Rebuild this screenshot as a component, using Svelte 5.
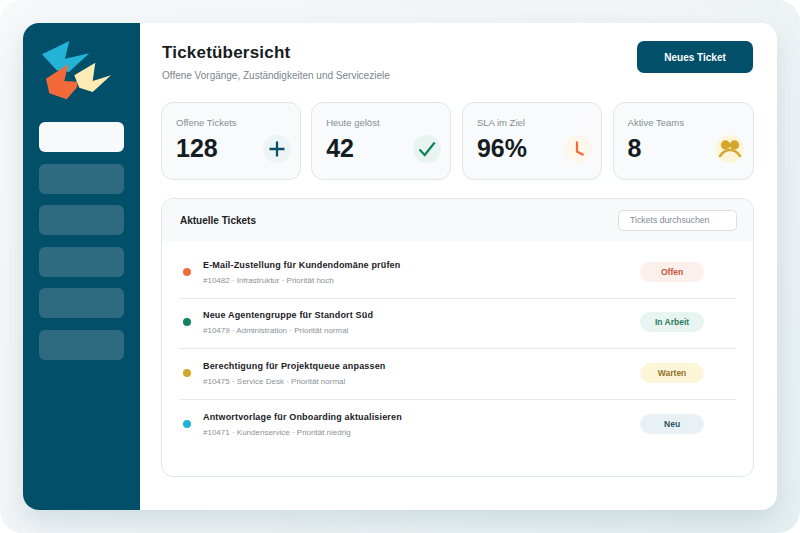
<script>
  const stats = [
    { label: 'Offene Tickets', value: '128', icon: 'plus' },
    { label: 'Heute gelöst', value: '42', icon: 'check' },
    { label: 'SLA im Ziel', value: '96%', icon: 'clock' },
    { label: 'Aktive Teams', value: '8', icon: 'team' }
  ];

  const tickets = [
    { title: 'E-Mail-Zustellung für Kundendomäne prüfen', meta: '#10482 · Infrastruktur · Priorität hoch', dot: 'orange', status: 'Offen', tone: 'open' },
    { title: 'Neue Agentengruppe für Standort Süd', meta: '#10479 · Administration · Priorität normal', dot: 'green', status: 'In Arbeit', tone: 'work' },
    { title: 'Berechtigung für Projektqueue anpassen', meta: '#10475 · Service Desk · Priorität normal', dot: 'yellow', status: 'Warten', tone: 'wait' },
    { title: 'Antwortvorlage für Onboarding aktualisieren', meta: '#10471 · Kundenservice · Priorität niedrig', dot: 'blue', status: 'Neu', tone: 'new' }
  ];

  const navItems = [0, 1, 2, 3, 4, 5];
</script>

<div class="backdrop">
  <div class="window">
    <aside class="sidebar">
      <svg class="logo" viewBox="0 0 72 62" width="72" height="62" aria-label="Logo">
        <polygon fill="#22b3d6" points="1,13.3 28.3,0 24,17.7 48.3,12.3 28,31 15.7,29.3" />
        <polygon fill="#f26a3a" points="5,37.7 27.3,23.3 23.3,40 36.7,40.7 35.7,46.7 25.7,58.3 8.3,52.3" />
        <polygon fill="#fdebb5" points="33.3,34.3 54.3,21.7 51.7,40 70,34.3 51.7,51 38.3,46.7" />
      </svg>
      <nav class="nav">
        {#each navItems as item}
          <div class="nav-item" class:active={item === 0}></div>
        {/each}
      </nav>
    </aside>

    <main class="main">
      <header class="top">
        <div>
          <h1>Ticketübersicht</h1>
          <p>Offene Vorgänge, Zuständigkeiten und Serviceziele</p>
        </div>
        <button class="primary">Neues Ticket</button>
      </header>

      <section class="stats">
        {#each stats as stat}
          <div class="stat">
            <div class="stat-label">{stat.label}</div>
            <div class="stat-value">{stat.value}</div>
            <div class="stat-icon {stat.icon}">
              <svg viewBox="0 0 28 28" width="28" height="28">
                {#if stat.icon === 'plus'}
                  <path d="M14 6.5v15M6.5 14h15" stroke="#0b4f68" stroke-width="2.3" fill="none" />
                {:else if stat.icon === 'check'}
                  <path d="M6.5 14.5l5.2 5.5 10-12.5" stroke="#128062" stroke-width="2.2" fill="none" />
                {:else if stat.icon === 'clock'}
                  <path d="M13 6.5v10l6.5 3.5" stroke="#f26a3a" stroke-width="2.2" fill="none" />
                {:else}
                  <circle cx="9.5" cy="10" r="4.7" fill="#d4a72c" />
                  <circle cx="18.5" cy="10" r="4.7" fill="#d4a72c" />
                  <path d="M4 21c3-4.500 6-6 10-6s7 1.500 10 6" stroke="#d4a72c" stroke-width="2.6" stroke-linecap="round" fill="none" />
                {/if}
              </svg>
            </div>
          </div>
        {/each}
      </section>

      <section class="panel">
        <div class="panel-head">
          <h2>Aktuelle Tickets</h2>
          <input class="search" placeholder="Tickets durchsuchen" />
        </div>
        <ul class="rows">
          {#each tickets as ticket}
            <li class="row">
              <span class="dot {ticket.dot}"></span>
              <div class="info">
                <div class="title">{ticket.title}</div>
                <div class="meta">{ticket.meta}</div>
              </div>
              <span class="pill {ticket.tone}">{ticket.status}</span>
            </li>
          {/each}
        </ul>
      </section>
    </main>
  </div>
</div>

<style>
  :global(body) {
    margin: 0;
    background: #fff;
    font-family: "Liberation Sans", Arial, sans-serif;
  }

  .backdrop {
    width: 800px;
    height: 533px;
    padding: 23px;
    box-sizing: border-box;
    border-radius: 22px;
    background: linear-gradient(135deg, #f6f8f9 0%, #f0f4f6 50%, #e5eff1 100%);
    overflow: hidden;
  }

  .window {
    display: flex;
    height: 487px;
    background: #fff;
    border-radius: 16px;
    overflow: hidden;
    box-shadow: 0 12px 26px rgba(11, 79, 104, 0.13);
  }

  .sidebar {
    width: 117px;
    flex: none;
    box-sizing: border-box;
    padding: 18px 16px 0;
    background: #024f6a;
  }

  .logo {
    display: block;
    margin-left: 2px;
  }

  .nav {
    display: flex;
    flex-direction: column;
    gap: 11.6px;
    margin-top: 19px;
  }

  .nav-item {
    height: 30px;
    border-radius: 6px;
    background: #2f6b80;
  }

  .nav-item.active {
    background: #f7f9fa;
  }

  .main {
    flex: 1;
    box-sizing: border-box;
    padding: 18px 23px 33px 21px;
    display: flex;
    flex-direction: column;
  }

  .top {
    display: flex;
    justify-content: space-between;
    align-items: flex-start;
    height: 61px;
  }

  h1 {
    margin: 1px 0 0 1px;
    font-size: 17px;
    line-height: 21px;
    letter-spacing: 0.2px;
    color: #171d22;
  }

  .top p {
    margin: 6px 0 0 1px;
    font-size: 10px;
    line-height: 14px;
    color: #7c868c;
  }

  .primary {
    width: 116px;
    height: 32px;
    margin-right: 1px;
    border: none;
    border-radius: 7px;
    background: #024f6a;
    color: #fff;
    font: bold 10px "Liberation Sans", Arial, sans-serif;
  }

  .stats {
    display: grid;
    grid-template-columns: 139.5px 140px 140px 141.5px;
    gap: 10.7px;
  }

  .stat {
    position: relative;
    height: 78px;
    box-sizing: border-box;
    padding: 14px 14px 0;
    border: 1.5px solid #dde6ea;
    border-radius: 12px;
    background: #f8fafb;
  }

  .stat-label {
    font-size: 9.5px;
    line-height: 12px;
    color: #848e94;
  }

  .stat-value {
    margin-top: 5px;
    font-size: 25px;
    line-height: 29px;
    font-weight: bold;
    color: #151c22;
  }

  .stat-icon {
    position: absolute;
    right: 9px;
    top: 32px;
    width: 28px;
    height: 28px;
    border-radius: 50%;
  }

  .stat-icon svg {
    display: block;
  }

  .plus { background: #edf4f5; }
  .check { background: #e8f4f0; }
  .clock { background: #fff6ec; }
  .team { background: #fdf5d8; }

  .panel {
    margin-top: 18px;
    flex: 1;
    border: 1.5px solid #e0e6e9;
    border-radius: 12px;
    overflow: hidden;
  }

  .panel-head {
    display: flex;
    justify-content: space-between;
    align-items: center;
    height: 42px;
    padding: 0 16px 0 18px;
    background: #f7f9fa;
  }

  h2 {
    margin: 1px 0 0;
    font-size: 10px;
    color: #1b2126;
  }

  .search {
    width: 119px;
    height: 21px;
    box-sizing: border-box;
    padding: 0 11px;
    border: 1px solid #d9dfe3;
    border-radius: 5px;
    background: #fff;
    font: 8.7px "Liberation Sans", Arial, sans-serif;
    outline: none;
  }

  .search::placeholder {
    color: #7f8a90;
    opacity: 1;
  }

  .rows {
    list-style: none;
    margin: 7.5px 17px 0 18px;
    padding: 0;
  }

  .row {
    display: flex;
    align-items: center;
    height: 50px;
    padding-bottom: 3px;
    box-sizing: border-box;
    border-bottom: 1px solid #e5e9ec;
    margin-bottom: 0.7px;
  }

  .row:last-child {
    border-bottom: none;
  }

  .dot {
    width: 8px;
    height: 8px;
    margin-left: 3px;
    border-radius: 50%;
    flex: none;
  }

  .orange { background: #f26a3a; }
  .green { background: #128062; }
  .yellow { background: #d4a72c; }
  .blue { background: #22b3d6; }

  .info {
    flex: 1;
    margin: 1px 0 0 12px;
  }

  .title {
    font-size: 9px;
    line-height: 12px;
    font-weight: bold;
    letter-spacing: 0.17px;
    color: #1b2126;
  }

  .meta {
    margin-top: 4px;
    font-size: 8px;
    line-height: 11px;
    color: #8a9398;
  }

  .pill {
    width: 64px;
    height: 20px;
    margin-right: 32px;
    border-radius: 10px;
    font-size: 8.5px;
    line-height: 20px;
    font-weight: bold;
    text-align: center;
  }

  .open { background: #fdf0ea; color: #c4553a; }
  .work { background: #e8f4f0; color: #2b7a62; }
  .wait { background: #fdf5d8; color: #94722a; }
  .new { background: #e8f2f4; color: #2c5568; }
</style>
